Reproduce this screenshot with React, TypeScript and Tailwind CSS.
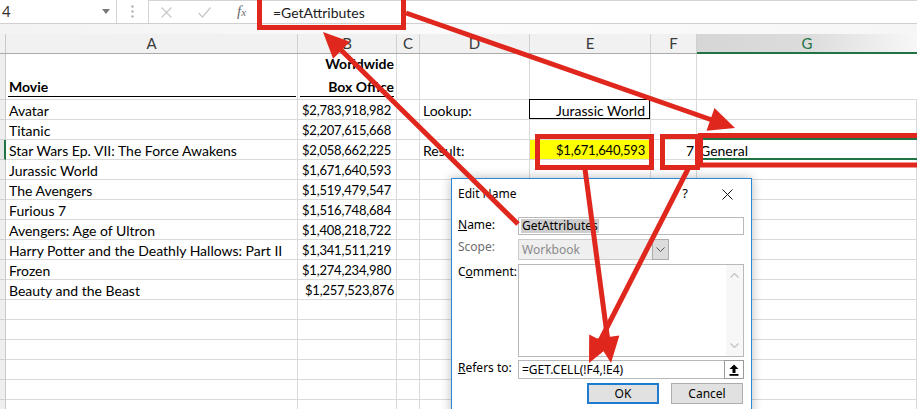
import React from 'react';

type Cell = {
  t?: string;
  right?: boolean;
  num?: boolean;
  cls?: string;
  tight?: boolean;
  box?: boolean;
  sel?: boolean;
};

const movies: [string, string][] = [
  ['Avatar', '$2,783,918,982'],
  ['Titanic', '$2,207,615,668'],
  ['Star Wars Ep. VII: The Force Awakens', '$2,058,662,225'],
  ['Jurassic World', '$1,671,640,593'],
  ['The Avengers', '$1,519,479,547'],
  ['Furious 7', '$1,516,748,684'],
  ['Avengers: Age of Ultron', '$1,408,218,722'],
  ['Harry Potter and the Deathly Hallows: Part II', '$1,341,511,219'],
  ['Frozen', '$1,274,234,980'],
  ['Beauty and the Beast', '$1,257,523,876'],
];

const colW = ['w-[292px]', 'w-[99px]', 'w-[23px]', 'w-[110px]', 'w-[121px]', 'w-[46px]', 'flex-1'];

function Row({ cells, idx }: { cells: Cell[]; idx: number }) {
  return (
    <div className="flex h-[20px]">
      <div
        className={
          idx === 2
            ? 'w-[6px] shrink-0 bg-[#e6e6e6] border-r-2 border-r-[#217346] border-b border-b-[#c9c9c9]'
            : 'w-[6px] shrink-0 bg-[#efefef] border-r border-r-[#c9c9c9] border-b border-b-[#d2d2d2]'
        }
      />
      {colW.map((w, i) => {
        const c = cells[i] || {};
        const pad = c.right ? (c.tight ? 'justify-end pr-[2px]' : 'justify-end pr-[5px]') : 'pl-[3px]';
        return (
          <div
            key={i}
            className={`${w} shrink-0 relative border-r border-b border-[#dadada] flex items-end overflow-visible whitespace-nowrap ${pad} ${c.cls || ''}`}
          >
            {c.box && <div className="absolute -left-px -top-px right-0 bottom-0 border border-black" />}
            {c.sel && <div className="absolute -left-px -top-[2px] -right-[20px] bottom-[-1px] border-2 border-[#217346]" />}
            <span className={`relative leading-[17px] ${c.num ? 'text-[13px] tracking-[-0.2px]' : ''}`}>{c.t}</span>
          </div>
        );
      })}
    </div>
  );
}

export default function App() {
  const rows: Cell[][] = movies.map(([m, v], i) => {
    const r: Cell[] = [{ t: m }, { t: v, right: true, num: true, tight: i === 9 }, {}, {}, {}, {}, {}];
    if (i === 0) {
      r[3] = { t: 'Lookup:' };
      r[4] = { t: 'Jurassic World', right: true, box: true };
    }
    if (i === 2) {
      r[3] = { t: 'Result:' };
      r[4] = { t: '$1,671,640,593', right: true, num: true, cls: 'bg-[#ffff00]' };
      r[5] = { t: '7', right: true, tight: true };
      r[6] = { t: 'General', sel: true };
    }
    return r;
  });
  const empty: Cell[][] = Array.from({ length: 6 }, () => []);

  return (
    <div className="relative w-[917px] h-[409px] overflow-hidden bg-white font-['Lato',sans-serif] text-[14px] text-black">
      {/* Formula bar */}
      <div className="flex h-[24px] border-b border-[#d0d0d0] bg-white">
        <div className="w-[117px] shrink-0 flex items-center justify-between border-r border-[#d4d4d4] pl-[2px] pr-[6px]">
          <span className="text-[15px] text-[#333]">4</span>
          <svg width="8" height="5" viewBox="0 0 8 5">
            <path d="M0 0 L8 0 L4 5 Z" fill="#7a7a7a" />
          </svg>
        </div>
        <div className="w-[31px] shrink-0 flex items-center justify-center">
          <svg width="3" height="13" viewBox="0 0 3 13">
            <circle cx="1.5" cy="1.5" r="1.2" fill="#b0b0b0" />
            <circle cx="1.5" cy="6.5" r="1.2" fill="#b0b0b0" />
            <circle cx="1.5" cy="11.5" r="1.2" fill="#b0b0b0" />
          </svg>
        </div>
        <div className="flex-1 flex items-center border-l border-t border-[#d4d4d4]">
          <div className="w-[110px] shrink-0 flex items-center pl-[12px] gap-[26px]">
            <svg width="11" height="11" viewBox="0 0 11 11">
              <path d="M0.5 0.5 L10.5 10.5 M10.5 0.5 L0.5 10.5" stroke="#c8c8c8" strokeWidth="1.2" />
            </svg>
            <svg width="13" height="11" viewBox="0 0 13 11">
              <path d="M0.5 6 L4.5 10 L12.5 0.5" stroke="#c8c8c8" strokeWidth="1.2" fill="none" />
            </svg>
            <span className="font-['Liberation_Serif',serif] italic text-[15px] text-[#6a6a6a] -mt-[2px]">
              f<span className="text-[11px]">x</span>
            </span>
          </div>
          <span className="pl-[14px] text-[14px] text-[#1a1a1a]">=GetAttributes</span>
        </div>
      </div>

      {/* gap strip */}
      <div className="h-[10px] bg-gradient-to-r from-[#f3f3f3] via-[#fbfbfb] to-[#f6f6f6]" />

      {/* column headers */}
      <div className="flex h-[20px] border-b border-[#ababab] bg-[#f1f1f1] text-[15px] text-[#3a3a3a]">
        <div className="w-[6px] shrink-0 border-r border-[#c9c9c9]" />
        <div className="w-[292px] shrink-0 border-r border-[#d0d0d0] flex items-center justify-center">A</div>
        <div className="w-[99px] shrink-0 border-r border-[#d0d0d0] flex items-center justify-center">B</div>
        <div className="w-[23px] shrink-0 border-r border-[#d0d0d0] flex items-center justify-center">C</div>
        <div className="w-[110px] shrink-0 border-r border-[#d0d0d0] flex items-center justify-center">D</div>
        <div className="w-[121px] shrink-0 border-r border-[#d0d0d0] flex items-center justify-center">E</div>
        <div className="w-[46px] shrink-0 border-r border-[#d0d0d0] flex items-center justify-center">F</div>
        <div className="flex-1 flex items-center justify-center bg-gradient-to-r from-[#d6d6d6] via-[#dcdcdc] to-[#f7f7f7] text-[#217346] border-b-2 border-[#217346] -mb-px">
          G
        </div>
      </div>

      {/* row 1 */}
      <div className="flex h-[46px] font-bold">
        <div className="w-[6px] shrink-0 bg-[#efefef] border-r border-r-[#c9c9c9] border-b border-b-[#d2d2d2]" />
        <div className="w-[292px] shrink-0 border-r border-b border-[#dadada] flex items-end pl-[2px] pr-[1px] pb-[2px]">
          <div className="w-full border-b-[1.5px] border-black pl-px leading-[18px] pb-[1px]">
            <div className="relative top-[1px]">Movie</div>
          </div>
        </div>
        <div className="w-[99px] shrink-0 border-r border-b border-[#dadada] flex items-end pl-[2px] pr-[2px] pb-[2px]">
          <div className="w-full border-b-[1.5px] border-black text-right leading-[23px] pb-[1px]">
            <div className="relative top-[3px]">
              Worldwide
              <br />
              Box Office
            </div>
          </div>
        </div>
        <div className="w-[23px] shrink-0 border-r border-b border-[#dadada]" />
        <div className="w-[110px] shrink-0 border-r border-b border-[#dadada]" />
        <div className="w-[121px] shrink-0 border-r border-b border-[#dadada]" />
        <div className="w-[46px] shrink-0 border-r border-b border-[#dadada]" />
        <div className="flex-1 border-b border-[#dadada]" />
      </div>

      {rows.map((r, i) => (
        <Row key={i} cells={r} idx={i} />
      ))}
      {empty.map((r, i) => (
        <Row key={'e' + i} cells={r} idx={100 + i} />
      ))}

      {/* Edit Name dialog */}
      <div className="absolute left-[451px] top-[178px] w-[301px] h-[240px] bg-white border border-[#2b87d3] shadow-[0_0_10px_rgba(0,0,0,0.28)] font-['Noto_Sans',sans-serif] text-[12px] text-black">
        <div className="h-[30px] flex items-center pl-[6px] pr-[18px]">
          <span>Edit Name</span>
          <span className="ml-auto mr-[34px] text-[13px]">?</span>
          <svg width="11" height="11" viewBox="0 0 11 11">
            <path d="M0.5 0.5 L10.5 10.5 M10.5 0.5 L0.5 10.5" stroke="#111" strokeWidth="1" />
          </svg>
        </div>
        <div className="pl-[6px] pr-[7px]">
          <div className="flex mt-[8px]">
            <div className="w-[60px] shrink-0 leading-[16px]">
              <span className="underline">N</span>ame:
            </div>
            <div className="w-[226px] h-[18px] border border-[#b9b9b9] flex items-center pl-[2px]">
              <span className="bg-[#cdcdcd] leading-[14px] px-px">GetAttributes</span>
            </div>
          </div>
          <div className="flex mt-[4px]">
            <div className="w-[60px] shrink-0 leading-[16px] text-[#6d6d6d]">Scope:</div>
            <div className="w-[151px] h-[21px] border border-[#cccccc] bg-[#efefef] flex items-center">
              <span className="pl-[3px] text-[#8a8a8a] flex-1">Workbook</span>
              <div className="w-[17px] h-[21px] -mr-px -mt-px -mb-px border border-[#adadad] bg-[#dcdcdc] flex items-center justify-center">
                <svg width="9" height="5" viewBox="0 0 9 5">
                  <path d="M0.5 0.5 L4.5 4.5 L8.5 0.5" stroke="#555" strokeWidth="1" fill="none" />
                </svg>
              </div>
            </div>
          </div>
          <div className="flex mt-[4px]">
            <div className="w-[60px] shrink-0 leading-[16px]">
              C<span className="underline">o</span>mment:
            </div>
            <div className="w-[226px] h-[93px] border border-[#b9b9b9] flex justify-end">
              <div className="w-[17px] h-full bg-[#f7f7f7] flex flex-col items-center justify-between py-[8px]">
                <svg width="9" height="5" viewBox="0 0 9 5">
                  <path d="M0.5 4.5 L4.5 0.5 L8.5 4.5" stroke="#c2c2c2" strokeWidth="1.2" fill="none" />
                </svg>
                <svg width="9" height="5" viewBox="0 0 9 5">
                  <path d="M0.5 0.5 L4.5 4.5 L8.5 0.5" stroke="#c2c2c2" strokeWidth="1.2" fill="none" />
                </svg>
              </div>
            </div>
          </div>
          <div className="flex mt-[3px]">
            <div className="w-[60px] shrink-0 leading-[16px]">
              <span className="underline">R</span>efers to:
            </div>
            <div className="w-[226px] h-[19px] border border-[#b9b9b9] flex items-center">
              <span className="pl-[3px] flex-1">=GET.CELL(!F4,!E4)</span>
              <div className="w-[20px] h-[19px] -mr-px border border-[#9a9a9a] bg-white flex items-center justify-center">
                <svg width="10" height="12" viewBox="0 0 10 12">
                  <path d="M5 0.5 L9.5 5 L6.5 5 L6.5 9 L3.5 9 L3.5 5 L0.5 5 Z" fill="#000" />
                  <rect x="0.5" y="10" width="9" height="1.8" fill="#000" />
                </svg>
              </div>
            </div>
          </div>
          <div className="flex justify-end gap-[12px] mt-[4px] pr-[1px]">
            <div className="w-[72px] h-[21px] border-2 border-[#1f7ad0] bg-[#e1e1e1] flex items-center justify-center">OK</div>
            <div className="w-[72px] h-[21px] border border-[#adadad] bg-[#e1e1e1] flex items-center justify-center">Cancel</div>
          </div>
        </div>
      </div>

      {/* red annotations */}
      <svg className="absolute inset-0 pointer-events-none" width="917" height="409" viewBox="0 0 917 409">
        <g fill="none" stroke="#e0271d" strokeWidth="5">
          <rect x="259.5" y="-5" width="144" height="32.5" />
          <rect x="537.5" y="136.5" width="114" height="31" />
          <rect x="662.5" y="136.5" width="35" height="31" />
          <rect x="700.5" y="135.5" width="240" height="29.5" />
          <line x1="406" y1="13" x2="712" y2="120" />
          <line x1="518" y1="224" x2="341" y2="50" />
          <line x1="585" y1="169" x2="607.5" y2="338" />
          <line x1="688" y1="169" x2="600" y2="341" />
        </g>
        <g fill="#e0271d">
          <polygon points="735,128 706.5,130.7 714.5,108.1" />
          <polygon points="323,32 349.9,41.7 333.1,58.7" />
          <polygon points="611,363 619.4,335.6 595.6,338.8" />
          <polygon points="589,363 610.6,345.4 589.2,334.4" />
        </g>
      </svg>
    </div>
  );
}
